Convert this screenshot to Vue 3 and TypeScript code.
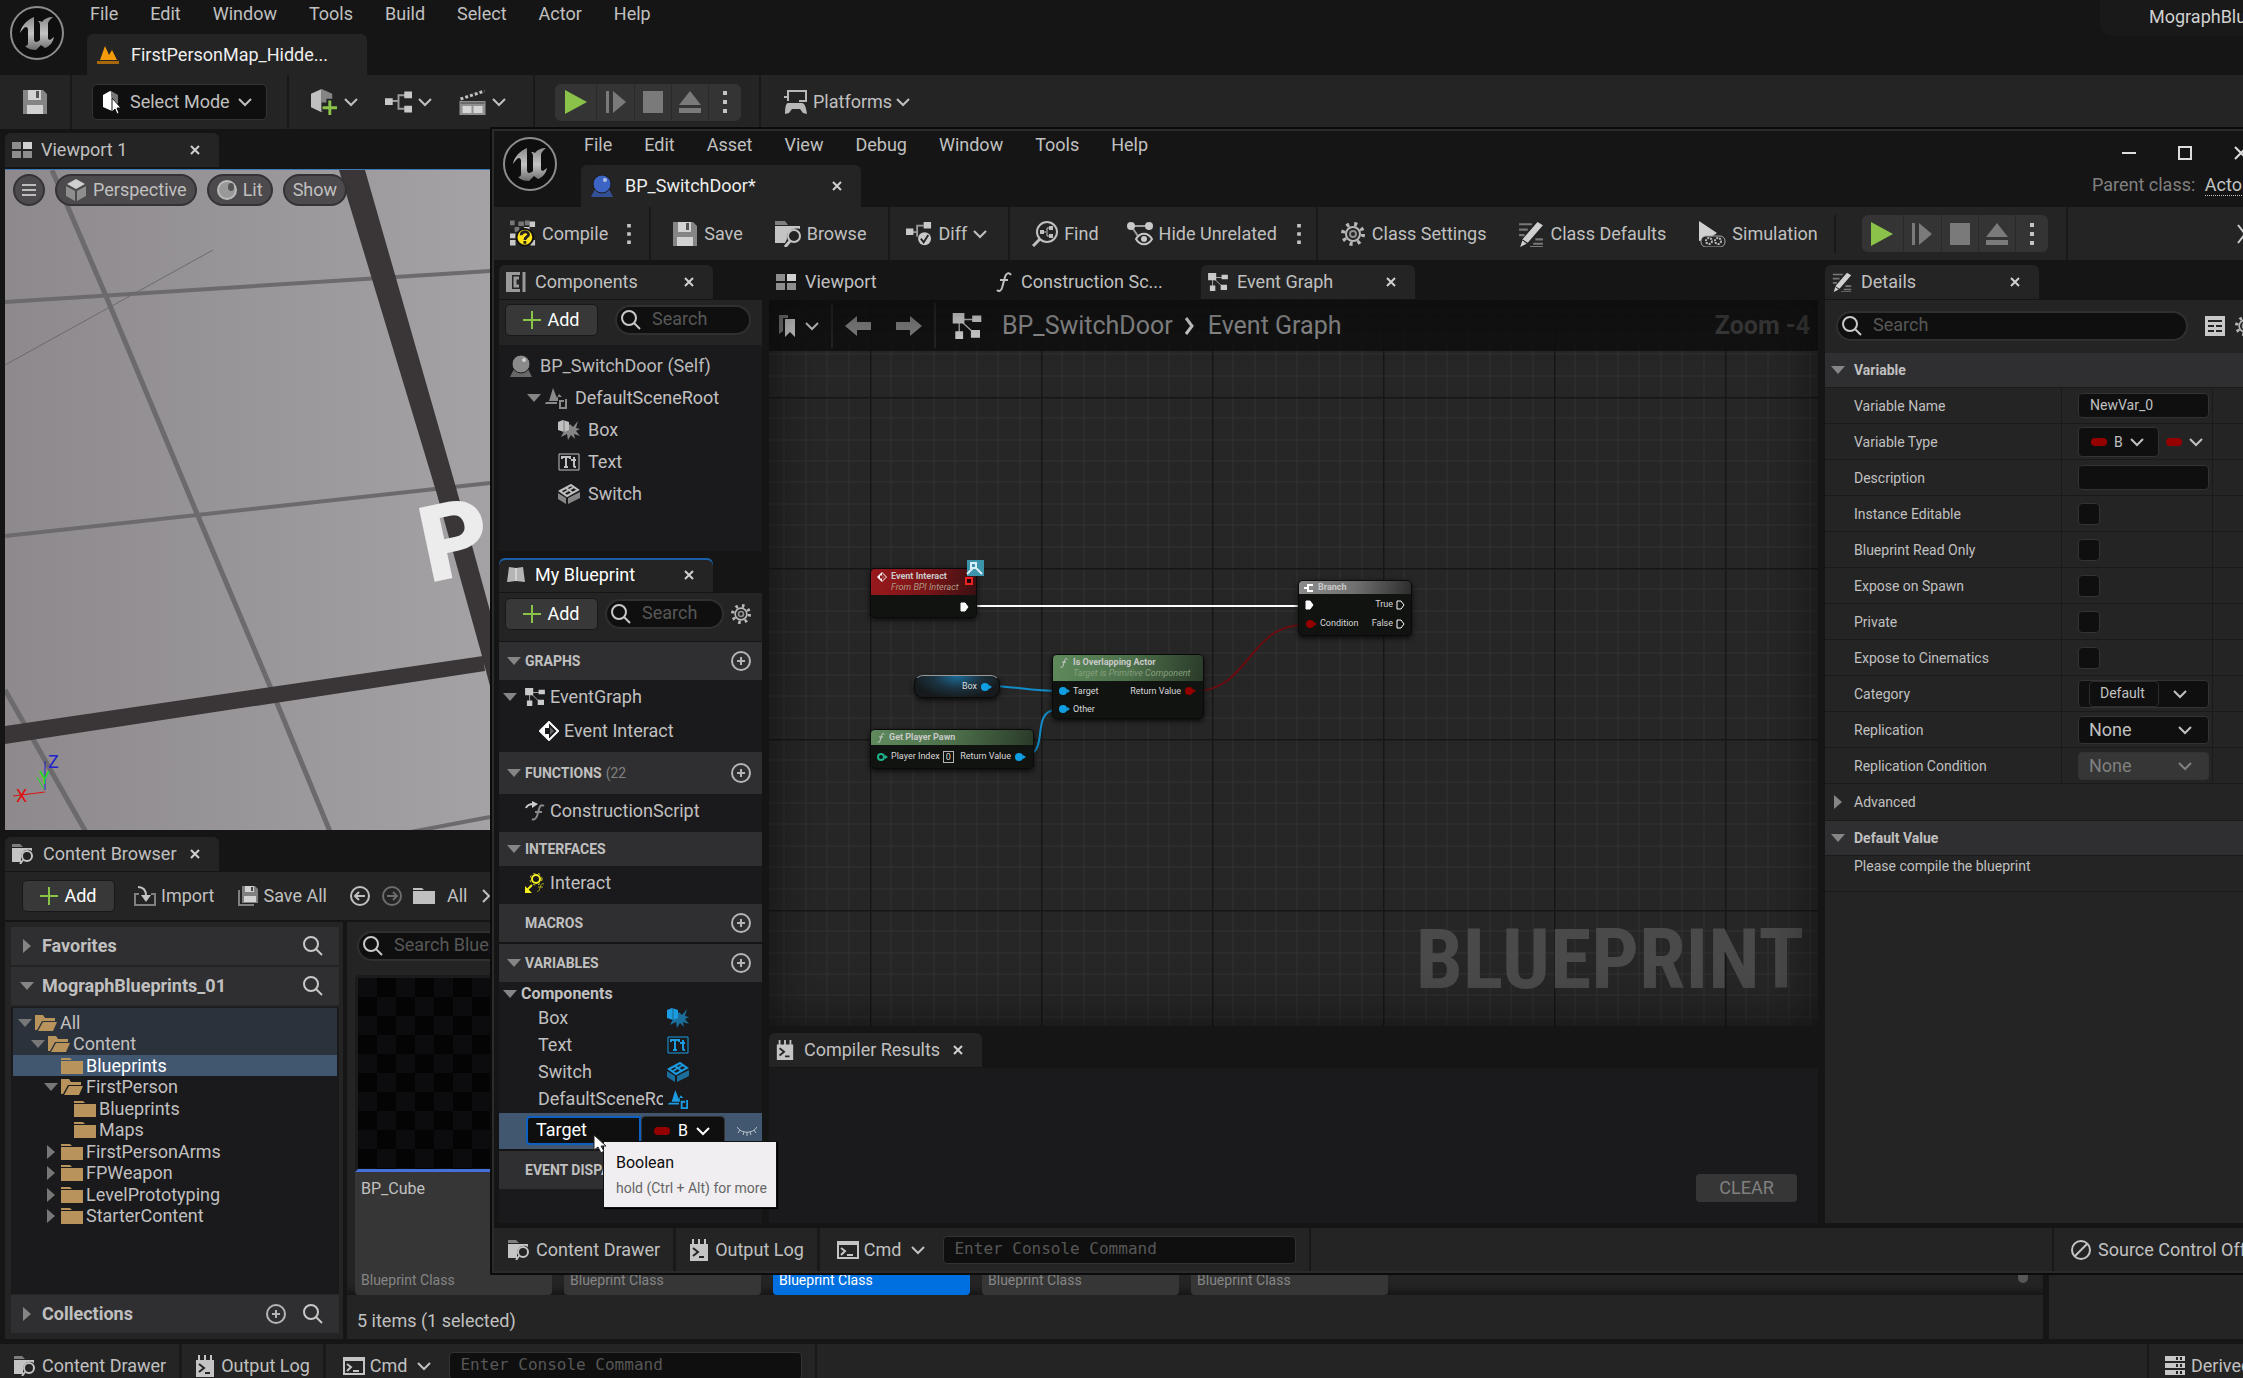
<script setup lang="ts">
import { ref } from 'vue'

const mainMenu = ['File', 'Edit', 'Window', 'Tools', 'Build', 'Select', 'Actor', 'Help']
const assetMenu = ['File', 'Edit', 'Asset', 'View', 'Debug', 'Window', 'Tools', 'Help']

interface Folder { name: string; depth: number; state: 'open' | 'closed' | 'leaf'; mark?: 'path' | 'selected' }
const folders: Folder[] = [
  { name: 'All', depth: 0, state: 'open', mark: 'path' },
  { name: 'Content', depth: 1, state: 'open', mark: 'path' },
  { name: 'Blueprints', depth: 2, state: 'leaf', mark: 'selected' },
  { name: 'FirstPerson', depth: 2, state: 'open' },
  { name: 'Blueprints', depth: 3, state: 'leaf' },
  { name: 'Maps', depth: 3, state: 'leaf' },
  { name: 'FirstPersonArms', depth: 2, state: 'closed' },
  { name: 'FPWeapon', depth: 2, state: 'closed' },
  { name: 'LevelPrototyping', depth: 2, state: 'closed' },
  { name: 'StarterContent', depth: 2, state: 'closed' },
]

interface Asset { name: string; selected: boolean }
const assets: Asset[] = [
  { name: 'BP_Cube', selected: false },
  { name: '', selected: false },
  { name: '', selected: true },
  { name: '', selected: false },
  { name: '', selected: false },
]

const children = [
  { name: 'Box', icon: 'box' },
  { name: 'Text', icon: 'text' },
  { name: 'Switch', icon: 'mesh' },
]
const variables = [...children, { name: 'DefaultSceneRoot', icon: 'root' }]
const flags = ['Instance Editable', 'Blueprint Read Only', 'Expose on Spawn', 'Private', 'Expose to Cinematics']

const variableName = ref('NewVar_0')
const renaming = ref('Target')
const description = ref('')
const minor = [21, 43, 64, 85, 107, 128, 150]
</script>

<template>
  <div class="app">
    <svg class="defs" aria-hidden="true">
      <defs>
        <linearGradient id="metal" x1="0" y1="0" x2="0" y2="1">
          <stop offset="0" stop-color="#8a8a8a" /><stop offset=".5" stop-color="#c4c4c4" /><stop offset="1" stop-color="#6c6c6c" />
        </linearGradient>
        <symbol id="logo" viewBox="0 0 54 54">
          <circle cx="27" cy="27" r="26" fill="#0e0e0e" stroke="#8d8d8d" stroke-width="2" />
          <path fill="url(#metal)" d="M24 11c-7 3-13 9-14 16 2-3 4-6 6-6 1 0 2 1 2 3v13c0 2-1 3-3 3 3 3 7 4 11 4l5-5 4 3c5-2 8-6 9-11l-4 3c-1 0-2-1-2-2V18c0-3 3-5 5-7-5 0-9 2-11 5-1-1-2-1-4-1 2 2 2 3 2 5v14c-1 1-3 2-4 2s-2-1-2-3V17c0-3 0-4 0-6z" />
        </symbol>
        <symbol id="save" viewBox="0 0 24 24"><path fill="#858585" d="M0 0h20l4 4v20H0z" /><path fill="#d2d2d2" d="M5 0h13v10H5zM4 15h16v9H4z" /><path fill="#555" d="M13 1h3v7h-3z" /></symbol>
        <symbol id="mode" viewBox="0 0 20 24"><path fill="#fff" d="M8 1l7 4v10l-5 6-9-4V5z" /><path fill="#777" d="M9 1l7 4v9l-7-7z" /><path fill="#fff" stroke="#111" d="M10 8l9 10h-4l2 5-2 1-2-5-3 3z" /></symbol>
        <symbol id="addcube" viewBox="0 0 28 28"><path fill="#c0c0c0" d="M0 5l11-5v24L0 19z" /><path fill="#858585" d="M11 0l11 5v11l-11 8z" /><path fill="#242424" d="M11 14h5v-4h8v5h4v8h-4v5h-8v-5h-5z" /><path fill="#8bc34a" d="M12 18h6v-6h3v6h6v3h-6v6h-3v-6h-6z" /></symbol>
        <symbol id="nodes" viewBox="0 0 28 22"><path fill="none" stroke="#9a9a9a" stroke-width="2" d="M7 10h6M21 4h-7v14h7" /><path fill="#c8c8c8" d="M0 7h8v7H0zM20 0h8v7h-8zM20 15h8v7h-8z" /></symbol>
        <symbol id="clap" viewBox="0 0 26 26"><path stroke="#c0c0c0" stroke-width="3" stroke-dasharray="3 2" d="M1 10L25 2" /><path fill="#909090" d="M0 12h26v14H0z" /><path fill="#d5d5d5" d="M3 17h9v7H3zM14 17h9v7h-9z" /><path stroke="#444" d="M1 14h24" /></symbol>
        <symbol id="play" viewBox="0 0 22 24"><path fill="#8bc34a" d="M0 0l22 12L0 24z" /></symbol>
        <symbol id="step" viewBox="0 0 22 24"><path fill="#7a7a7a" d="M1 1h3v22H1zM8 1l13 11L8 23z" /></symbol>
        <symbol id="stop" viewBox="0 0 22 24"><path fill="#7a7a7a" d="M1 1h20v22H1z" /></symbol>
        <symbol id="eject" viewBox="0 0 22 24"><path fill="#7a7a7a" d="M11 1l11 14H0zM0 18h22v5H0z" /></symbol>
        <symbol id="dots" viewBox="0 0 6 24"><path fill="#c4c4c4" d="M1 1h4v4H1zM1 10h4v4H1zM1 19h4v4H1z" /></symbol>
        <symbol id="platforms" viewBox="0 0 26 26"><path fill="none" stroke="#b8b8b8" stroke-width="2" d="M5 12V2h18v10h-7M1 8h4" /><path fill="#b8b8b8" d="M5 14h14c2 0 4 3 5 11l-4-1-3-4H9l-3 4-4 1c0-7 1-11 3-11z" /></symbol>
        <symbol id="chev" viewBox="0 0 14 14"><path fill="none" stroke="currentColor" stroke-width="2" d="M1 4l6 6 6-6" /></symbol>
        <symbol id="close" viewBox="0 0 14 14"><path stroke="currentColor" stroke-width="2" d="M3 3l8 8M11 3l-8 8" /></symbol>
        <symbol id="quad" viewBox="0 0 20 16"><path fill="#8d8d8d" d="M0 0h9v7H0zM0 9h9v7H0zM11 9h9v7h-9z" /><path fill="#d0d0d0" d="M11 0h9v7h-9z" /></symbol>
        <symbol id="burger" viewBox="0 0 16 16"><path stroke="#bdbdbd" stroke-width="2" d="M1 3h14M1 8h14M1 13h14" /></symbol>
        <symbol id="persp" viewBox="0 0 22 22"><path fill="#cfcfcf" d="M11 0l9 5-9 5-9-5z" /><path fill="#8e8e8e" d="M1 7l9 5v10l-9-5zM21 7l-9 5v10l9-5z" /></symbol>
        <symbol id="lit" viewBox="0 0 20 20"><circle cx="10" cy="10" r="9" fill="#999" stroke="#bbb" stroke-width="2" /><ellipse cx="14" cy="7" rx="3" ry="4" fill="#555" /></symbol>
        <symbol id="drawer" viewBox="0 0 22 20"><path fill="#7e7e7e" d="M0 0h8l3 3H0z" /><path fill="#c4c4c4" d="M0 4h20v3c-5-3-11 0-11 6v5H0z" /><circle cx="15" cy="12" r="5" fill="#242424" stroke="#c4c4c4" stroke-width="2" /><path stroke="#c4c4c4" stroke-width="2" d="M11 16l-3 4" /></symbol>
        <symbol id="plus" viewBox="0 0 18 18"><path stroke="#8bc34a" stroke-width="2" d="M9 0v18M0 9h18" /></symbol>
        <symbol id="import" viewBox="0 0 22 20"><path fill="none" stroke="#808080" stroke-width="2" d="M5 8H1v11h20V8h-4" /><path fill="none" stroke="#c4c4c4" stroke-width="2" d="M4 1c6 0 8 4 8 9" /><path fill="#c4c4c4" d="M7 9h10l-5 7z" /></symbol>
        <symbol id="saveall" viewBox="0 0 20 20"><path fill="none" stroke="#808080" stroke-width="2" d="M1 4v15h15" /><path fill="#808080" d="M4 0h13l3 3v14H4z" /><path fill="#d2d2d2" d="M7 0h9v6H7zM6 10h12v6H6z" /><path fill="#444" d="M13 1h2v4h-2z" /></symbol>
        <symbol id="back" viewBox="0 0 22 22"><circle cx="11" cy="11" r="9" fill="none" stroke="currentColor" stroke-width="2" /><path fill="none" stroke="currentColor" stroke-width="2" d="M16 11H6M10 7l-4 4 4 4" /></symbol>
        <symbol id="folder" viewBox="0 0 22 16"><path fill="currentColor" d="M0 0h9l2 2H0zM0 3h22v13H0z" /></symbol>
        <symbol id="folderopen" viewBox="0 0 22 16"><path fill="currentColor" d="M0 0h8l2 3h10v3H7l-5 9H0z" /><path fill="currentColor" d="M8 7h14l-4 9H3z" /></symbol>
        <symbol id="search" viewBox="0 0 22 22"><circle cx="9" cy="9" r="7" fill="none" stroke="#c8c8c8" stroke-width="2" /><path stroke="#c8c8c8" stroke-width="2" d="M14 14l6 6" /></symbol>
        <symbol id="down" viewBox="0 0 14 10"><path fill="currentColor" d="M0 1h14L7 9z" /></symbol>
        <symbol id="right" viewBox="0 0 10 14"><path fill="currentColor" d="M1 0l8 7-8 7z" /></symbol>
        <symbol id="pluscircle" viewBox="0 0 20 20"><circle cx="10" cy="10" r="9" fill="none" stroke="#b5b5b5" stroke-width="2" /><path stroke="#b5b5b5" stroke-width="2" d="M10 6v8M6 10h8" /></symbol>
        <symbol id="log" viewBox="0 0 18 22"><path fill="#c4c4c4" d="M0 5h18v17H0zM2 0h2v6H2zM8 0h2v6H8zM14 0h2v6h-2z" /><path fill="none" stroke="#242424" stroke-width="2" d="M3 9l5 4-5 4M9 18h5" /></symbol>
        <symbol id="cmd" viewBox="0 0 22 18"><path fill="none" stroke="#c4c4c4" stroke-width="2" d="M1 1h20v16H1z" /><path fill="#c4c4c4" d="M1 1h20v3H1z" /><path fill="none" stroke="#c4c4c4" stroke-width="2" d="M4 7l4 3-4 4M10 14h6" /></symbol>
        <symbol id="compile" viewBox="0 0 28 28"><path fill="#777" d="M0 0h5v5H0zM9 1h6v5H9zM5 7h5v5H5zM16 0h5v5h-5z" /><path fill="#c8c8c8" d="M21 1h6v6h-6zM0 14h6v5H0zM0 21h6v6H0zM15 7h6v5h-6zM22 21h5v6h-5z" /><circle cx="16" cy="18" r="9" fill="#ffe21b" stroke="#111" stroke-width="2" /><path fill="none" stroke="#222" stroke-width="3" d="M12 16c0-5 8-5 8-1 0 3-4 2-4 6M16 22v3" /></symbol>
        <symbol id="browse" viewBox="0 0 26 26"><path fill="#808080" d="M0 0h10l3 4H0z" /><path fill="#c4c4c4" d="M0 5h25v3c-8-2-14 3-13 10l-2 4H0z" /><circle cx="19" cy="15" r="6" fill="#242424" stroke="#c4c4c4" stroke-width="2" /><path stroke="#c4c4c4" stroke-width="3" d="M15 20l-5 6" /></symbol>
        <symbol id="diff" viewBox="0 0 28 26"><path fill="none" stroke="#999" stroke-width="2" d="M7 11h5V4h7M12 11v5" /><path fill="#c8c8c8" d="M0 7h8v7H0zM19 0h8v7h-8z" /><circle cx="20" cy="18" r="7" fill="#c8c8c8" /><path fill="none" stroke="#242424" stroke-width="2" d="M16 18l3 4 5-8" /></symbol>
        <symbol id="find" viewBox="0 0 26 26"><circle cx="15" cy="11" r="10" fill="none" stroke="#c0c0c0" stroke-width="2" /><path stroke="#c0c0c0" stroke-width="3" d="M8 18l-7 7" /><path fill="none" stroke="#c0c0c0" d="M11 11h3M18 7h-3v8h3" /><path fill="#c0c0c0" d="M8 9h4v4H8zM17 5h4v4h-4zM17 13h4v4h-4z" /></symbol>
        <symbol id="hide" viewBox="0 0 26 24"><path fill="none" stroke="#a0a0a0" stroke-width="2" d="M4 4h18M4 4l7 10" /><circle cx="4" cy="4" r="4" fill="#c8c8c8" /><circle cx="22" cy="4" r="4" fill="#c8c8c8" /><path fill="#242424" stroke="#c8c8c8" stroke-width="2" d="M9 17c4-7 12-7 16 0-4 7-12 7-16 0z" /><circle cx="17" cy="17" r="3" fill="#c8c8c8" /></symbol>
        <symbol id="gear" viewBox="0 0 24 24"><circle cx="12" cy="12" r="10" fill="none" stroke="#b8b8b8" stroke-width="4" stroke-dasharray="3 5" /><circle cx="12" cy="12" r="7" fill="none" stroke="#b8b8b8" stroke-width="2" /><circle cx="12" cy="12" r="3" fill="none" stroke="#909090" stroke-width="2" /></symbol>
        <symbol id="pencil" viewBox="0 0 24 24"><path stroke="#777" stroke-width="2" d="M1 3h12M1 8h8M1 13h5M16 17h7M14 21h9M11 24h12" /><path fill="#d0d0d0" d="M18 1l5 3L9 20l-5-3zM4 18l4 3-6 3z" /></symbol>
        <symbol id="sim" viewBox="0 0 28 26"><path fill="#d0d0d0" d="M1 0l18 12-3 2-6 4-9 2z" /><rect x="3" y="15" width="24" height="11" rx="5" fill="#242424" stroke="#a8a8a8" /><circle cx="11" cy="20" r="3" fill="none" stroke="#bbb" stroke-width="2" stroke-dasharray="2 1" /><circle cx="20" cy="20" r="3" fill="none" stroke="#bbb" stroke-width="2" stroke-dasharray="2 1" /></symbol>
        <symbol id="comp" viewBox="0 0 20 20"><path fill="#9a9a9a" d="M0 0h14v3H6v14h8v3H0z" /><path fill="none" stroke="#9a9a9a" stroke-width="3" d="M13 6H9v8h4M18 0v20" /></symbol>
        <symbol id="func" viewBox="0 0 16 20"><path fill="none" stroke="currentColor" stroke-width="2" d="M15 3c-2-3-5-2-6 2L6 16c-1 3-3 4-5 2M4 8h8" /></symbol>
        <symbol id="graph" viewBox="0 0 22 20"><path fill="none" stroke="#b0b0b0" d="M5 5h12M5 5l12 11M5 5v12" /><path fill="#cacaca" d="M0 0h9v8H0zM15 2h7v5h-7zM14 13h7v6h-7zM2 14h6v6H2z" /></symbol>
        <symbol id="bookmark" viewBox="0 0 16 22"><path fill="#777" d="M0 0h9v3H4v13l-4 3z" /><path fill="#c8c8c8" d="M6 4h10v18l-5-5-5 5z" /></symbol>
        <symbol id="arrow" viewBox="0 0 26 20"><path fill="#7a7a7a" d="M0 10L12 0v6h14v8H12v6z" /></symbol>
        <symbol id="actor" viewBox="0 0 22 22"><path fill="currentColor" d="M4 14h14l4 8H0z" opacity=".7" /><circle cx="11" cy="9" r="9" fill="currentColor" stroke="#1b1b1b" /><circle cx="14" cy="5" r="2" fill="#fff" opacity=".6" /></symbol>
        <symbol id="level" viewBox="0 0 22 18"><path fill="#f59b0b" d="M3 14L8 0l4 9 3-5 5 10z" /><path fill="#a8690c" d="M0 15h22v3H0z" /></symbol>
        <symbol id="root" viewBox="0 0 22 22"><path fill="currentColor" d="M4 14L8 1l4 10 2-4 3 3h-4v4zM1 15h11v2H0z" /><path fill="none" stroke="currentColor" stroke-width="2" d="M19 14h-4v7h6v-9" /></symbol>
        <symbol id="box" viewBox="0 0 22 20"><path fill="currentColor" opacity=".65" d="M12 4l3 3 5-6-2 7 4 1-4 2 4 5-6-2 1 5-4-4-3 5-1-6-6 3 3-6z" /><path fill="currentColor" d="M0 2l5-2 6 2v8l-5 2-6-2z" /><path stroke="#1a191c" opacity=".4" d="M6 0v12" /></symbol>
        <symbol id="text" viewBox="0 0 22 18"><path fill="none" stroke="currentColor" d="M1 1h20v16H1z" /><path fill="none" stroke="currentColor" stroke-width="2" d="M4 6V4h8v2M8 4v10M6 14h4M16 4v9c0 1 1 1 2 1M13 7h5" /></symbol>
        <symbol id="mesh" viewBox="0 0 22 20"><path fill="none" stroke="currentColor" stroke-width="2" d="M2 7L13 1l7 5-11 6zM8 4l7 5M6 9l10-6" /><path fill="currentColor" opacity=".65" d="M0 9l8 5v6l-8-5zM10 14l12-6v6l-12 6z" /></symbol>
        <symbol id="book" viewBox="0 0 20 18"><path fill="#b5b5b5" d="M3 1l7 1 7-1 2 15-9-1-9 1z" /><path stroke="#eee" d="M10 2v13" /></symbol>
        <symbol id="event" viewBox="0 0 20 20"><path fill="none" stroke="#fff" stroke-width="2" d="M10 1l9 9-9 9-9-9z" /><path fill="#fff" d="M10 1v6H6v6h4v6l-9-9z" /><path fill="#fff" d="M11 6l4 4-4 4z" opacity=".3" /></symbol>
        <symbol id="cscript" viewBox="0 0 20 20"><path fill="none" stroke="#888" stroke-width="2" d="M19 5c-3-2-4 0-5 3l-2 7c-1 3-3 4-5 3M10 11h7" /><path fill="none" stroke="#ccc" stroke-width="2" d="M1 7c1-3 4-4 8-4" /><path fill="#ccc" d="M7 0l6 3-6 4z" /></symbol>
        <symbol id="iface" viewBox="0 0 20 20"><circle cx="11" cy="6" r="4" fill="none" stroke="#f4ee1d" stroke-width="2" /><circle cx="11" cy="6" r="6" fill="none" stroke="#f4ee1d" stroke-width="1" stroke-dasharray="2 3" /><path stroke="#f4ee1d" stroke-width="2" d="M7 12l-5 5" /><path fill="#f4ee1d" d="M0 13v7h7z" /><path fill="none" stroke="#b1ac18" d="M19 11c-3-1-3 1-4 4s-2 4-3 3M13 14h5" /></symbol>
        <symbol id="eye" viewBox="0 0 20 10"><path fill="none" stroke="#b9c2cb" stroke-width="1" d="M0 1c4 7 16 7 20 0M3 4L1 7M7 6l-1 3M13 6l1 3M17 4l2 3M10 6v4" /></symbol>
        <symbol id="nosrc" viewBox="0 0 22 22"><circle cx="11" cy="11" r="9" fill="none" stroke="#c4c4c4" stroke-width="2" /><path stroke="#c4c4c4" stroke-width="2" d="M5 17L17 5" /></symbol>
        <symbol id="server" viewBox="0 0 20 20"><path fill="#c8c8c8" d="M0 0h20v5H0zM0 7h20v5H0zM0 14h20v5H0z" /><path stroke="#242424" stroke-width="2" d="M12 1v3M16 1v3M12 8v3M16 8v3M12 15v3M16 15v3" /></symbol>
        <symbol id="grid" viewBox="0 0 20 20"><path fill="#c8c8c8" d="M0 0h20v20H0z" /><path stroke="#242424" stroke-width="2" d="M3 5h14M3 10h6M11 10h6M3 15h6M11 15h6" /></symbol>
        <symbol id="exec" viewBox="0 0 9 10"><path d="M1 1h4l3 4-3 4H1z" fill="currentColor" stroke="#fff" /></symbol>
        <symbol id="pin" viewBox="0 0 12 10"><circle cx="5" cy="5" r="4" fill="currentColor" /><path fill="currentColor" d="M9 3l3 2-3 2z" /></symbol>
        <symbol id="branch" viewBox="0 0 10 10"><path fill="none" stroke="#fff" stroke-width="2" d="M0 5h3M9 2H4v6h5" /></symbol>
      </defs>
    </svg>

    <!-- Level editor -->
    <header class="title">
      <svg class="logo"><use href="#logo" /></svg>
      <div class="title-col">
        <nav class="menu"><button v-for="m in mainMenu" :key="m">{{ m }}</button></nav>
        <div class="doc-tab"><svg width="22" height="18"><use href="#level" /></svg><span>FirstPersonMap_Hidde...</span></div>
      </div>
      <div class="project">MographBlueprints_01</div>
    </header>

    <div class="toolbar">
      <button class="savebtn" aria-label="Save"><svg width="24" height="24"><use href="#save" /></svg></button>
      <i class="sep"></i>
      <button class="mode"><svg width="20" height="24"><use href="#mode" /></svg>Select Mode<svg class="chev"><use href="#chev" /></svg></button>
      <i class="sep"></i>
      <div class="quick">
        <button aria-label="Add"><svg width="27" height="27"><use href="#addcube" /></svg><svg class="chev"><use href="#chev" /></svg></button>
        <button aria-label="Blueprints"><svg width="27" height="22"><use href="#nodes" /></svg><svg class="chev"><use href="#chev" /></svg></button>
        <button aria-label="Cinematics"><svg width="27" height="26"><use href="#clap" /></svg><svg class="chev"><use href="#chev" /></svg></button>
      </div>
      <i class="sep"></i>
      <div class="player main-player">
        <button v-for="p in ['play', 'step', 'stop', 'eject']" :key="p" :aria-label="p"><svg width="22" height="24"><use :href="'#' + p" /></svg></button>
        <button aria-label="Play options"><svg width="6" height="24"><use href="#dots" /></svg></button>
      </div>
      <i class="sep"></i>
      <button class="tool platforms"><svg width="26" height="26"><use href="#platforms" /></svg>Platforms<svg class="chev"><use href="#chev" /></svg></button>
    </div>

    <main class="main">
      <div class="tabs"><div class="tab on"><svg width="20" height="16"><use href="#quad" /></svg>Viewport 1<button class="x" aria-label="Close"><svg><use href="#close" /></svg></button></div></div>
      <section class="viewport">
        <svg class="scene">
          <defs>
            <linearGradient id="floor" gradientUnits="userSpaceOnUse" x1="0" y1="0" x2="485" y2="0"><stop offset="0" stop-color="#8d898d" /><stop offset="1" stop-color="#a5a2a5" /></linearGradient>
          </defs>
          <rect width="100%" height="100%" fill="url(#floor)" />
          <g stroke="#6d6a6d" fill="none">
            <path stroke-width="4" d="M0 132L485 101M0 366L485 313M395 664L485 647" />
            <path stroke-width="5" d="M47 0L101 126 193 346 267 521 326 664M0 520L82 664" />
            <path d="M0 195L208 80" />
          </g>
          <path fill="#3a3638" d="M334 0h26L452 321l33 120v75L477 486 431 321zM0 556L478 486l2 15L0 574z" />
          <text x="424" y="413" class="floor-text" transform="rotate(-12 424 413)">P</text>
          <g fill="none"><path stroke="#e01212" d="M8 626l32-4" /><path stroke="#2020d0" d="M40 620v-29" /><path stroke="#18e018" d="M39 619l-7-12" /></g>
          <text x="43" y="598" fill="#2222cf" font-size="18">Z</text>
          <text x="34" y="614" fill="#1fdc1f" font-size="18">Y</text>
          <text x="11" y="632" fill="#e01212" font-size="18">X</text>
        </svg>
        <div class="pills">
          <button class="round" aria-label="Viewport options"><svg width="16" height="16"><use href="#burger" /></svg></button>
          <button><svg width="22" height="22"><use href="#persp" /></svg>Perspective</button>
          <button><svg width="20" height="20"><use href="#lit" /></svg>Lit</button>
          <button>Show</button>
        </div>
      </section>

      <div class="tabs browser-tabs"><div class="tab on"><svg width="22" height="20"><use href="#drawer" /></svg>Content Browser<button class="x" aria-label="Close"><svg><use href="#close" /></svg></button></div></div>
      <div class="browser-bar">
        <button class="add"><svg width="18" height="18"><use href="#plus" /></svg>Add</button>
        <button class="flat"><svg width="22" height="20"><use href="#import" /></svg>Import</button>
        <button class="flat"><svg width="20" height="20"><use href="#saveall" /></svg>Save All</button>
        <div class="path">
          <button class="flat" aria-label="Back"><svg width="22" height="22"><use href="#back" /></svg></button>
          <button class="flat fwd" aria-label="Forward"><svg width="22" height="22"><use href="#back" /></svg></button>
          <svg width="22" height="16" class="here"><use href="#folder" /></svg><span>All</span><svg class="chev"><use href="#chev" /></svg>
        </div>
      </div>
      <div class="browser">
        <aside class="sources">
          <div class="head"><svg width="14" height="14"><use href="#right" /></svg><b>Favorites</b><svg width="22" height="22"><use href="#search" /></svg></div>
          <div class="head"><svg width="14" height="10"><use href="#down" /></svg><b>MographBlueprints_01</b><svg width="22" height="22"><use href="#search" /></svg></div>
          <ul class="folders">
            <li v-for="(f, i) in folders" :key="i" :class="f.mark">
              <div :class="['entry', 'd' + f.depth]">
                <svg width="14" height="14" class="arrow"><use v-if="f.state !== 'leaf'" :href="f.state === 'open' ? '#down' : '#right'" /></svg>
                <svg width="22" height="16" class="gold"><use :href="f.state === 'open' ? '#folderopen' : '#folder'" /></svg>{{ f.name }}
              </div>
            </li>
          </ul>
          <div class="head"><svg width="14" height="14"><use href="#right" /></svg><b>Collections</b><svg width="20" height="20"><use href="#pluscircle" /></svg><svg width="22" height="22" class="far"><use href="#search" /></svg></div>
        </aside>
        <section class="assets">
          <label class="searchbox asset-search"><svg width="22" height="22"><use href="#search" /></svg><input type="text" placeholder="Search Blueprints" aria-label="Search Blueprints" /></label>
          <div class="tiles">
            <article v-for="(a, i) in assets" :key="i" :class="['tile', { chosen: a.selected }]">
              <div class="thumb"></div>
              <span class="name">{{ a.name }}</span>
              <small>Blueprint Class</small>
            </article>
            <i class="thumbbar"></i>
          </div>
          <p>5 items (1 selected)</p>
        </section>
        <aside class="rest"></aside>
      </div>
    </main>

    <footer class="status main-status">
      <button class="st"><svg width="22" height="20"><use href="#drawer" /></svg>Content Drawer</button>
      <button class="st log"><svg width="18" height="22"><use href="#log" /></svg>Output Log</button>
      <div class="console">
        <button class="cmd"><svg width="22" height="18"><use href="#cmd" /></svg>Cmd<svg class="chev"><use href="#chev" /></svg></button>
        <input type="text" placeholder="Enter Console Command" aria-label="Console command" />
      </div>
      <div class="tail derived"><svg width="20" height="20"><use href="#server" /></svg>Derived Data</div>
    </footer>

    <!-- Blueprint editor window -->
    <div class="window">
      <div class="frame">
        <header class="title">
          <svg class="logo"><use href="#logo" /></svg>
          <div class="title-col">
            <nav class="menu"><button v-for="m in assetMenu" :key="m">{{ m }}</button></nav>
            <div class="doc-tab"><svg width="22" height="22" class="blue"><use href="#actor" /></svg><span>BP_SwitchDoor*</span><button class="x" aria-label="Close"><svg><use href="#close" /></svg></button></div>
          </div>
          <div class="win-side">
            <div class="controls">
              <button aria-label="Minimize"><svg width="14" height="14"><path stroke="#ddd" stroke-width="2" d="M0 7h14" /></svg></button>
              <button aria-label="Maximize"><svg width="14" height="14"><path fill="none" stroke="#ddd" stroke-width="2" d="M1 1h12v12H1z" /></svg></button>
              <button aria-label="Close window"><svg width="14" height="14"><path stroke="#ddd" stroke-width="2" d="M1 1l12 12M13 1L1 13" /></svg></button>
            </div>
            <div class="parent">Parent class: <a href="#">Actor</a></div>
          </div>
        </header>

        <div class="toolbar">
          <button class="tool"><svg width="26" height="27"><use href="#compile" /></svg>Compile</button>
          <button class="more" aria-label="Compile options"><svg width="6" height="22"><use href="#dots" /></svg></button>
          <i class="sep"></i>
          <div class="set first">
            <button class="tool"><svg width="26" height="24"><use href="#save" /></svg>Save</button>
            <button class="tool"><svg width="26" height="26"><use href="#browse" /></svg>Browse</button>
          </div>
          <i class="sep"></i>
          <button class="tool"><svg width="26" height="26"><use href="#diff" /></svg>Diff<svg class="chev"><use href="#chev" /></svg></button>
          <i class="sep wide"></i>
          <div class="set snug">
            <button class="tool"><svg width="26" height="26"><use href="#find" /></svg>Find</button>
            <button class="tool"><svg width="26" height="24"><use href="#hide" /></svg>Hide Unrelated</button>
          </div>
          <button class="more tight" aria-label="Hide options"><svg width="6" height="22"><use href="#dots" /></svg></button>
          <i class="sep"></i>
          <div class="set open">
            <button class="tool"><svg width="26" height="24"><use href="#gear" /></svg>Class Settings</button>
            <button class="tool"><svg width="26" height="26"><use href="#pencil" /></svg>Class Defaults</button>
            <button class="tool"><svg width="28" height="26"><use href="#sim" /></svg>Simulation</button>
          </div>
          <i class="sep short"></i>
          <div class="player">
            <button v-for="p in ['play', 'step', 'stop', 'eject']" :key="p" :aria-label="p"><svg width="22" height="24"><use :href="'#' + p" /></svg></button>
            <button aria-label="Play options"><svg width="6" height="24"><use href="#dots" /></svg></button>
          </div>
          <i class="sep"></i>
          <button class="overflow" aria-label="More tools"><svg width="14" height="20"><path fill="none" stroke="#ccc" stroke-width="2" d="M1 1l7 9-7 9M7 1l7 9-7 9" /></svg></button>
        </div>

        <div class="body">
          <aside class="left">
            <div class="tabs"><div class="tab on"><svg width="20" height="20"><use href="#comp" /></svg>Components<button class="x" aria-label="Close"><svg><use href="#close" /></svg></button></div></div>
            <div class="panel-bar">
              <button class="add"><svg width="18" height="18"><use href="#plus" /></svg>Add</button>
              <label class="searchbox"><svg width="22" height="22"><use href="#search" /></svg><input type="text" placeholder="Search" aria-label="Search components" /></label>
            </div>
            <ul class="comps">
              <li class="self"><svg width="22" height="22"><use href="#actor" /></svg>BP_SwitchDoor (Self)</li>
              <li class="sroot"><svg width="14" height="10" class="dim"><use href="#down" /></svg><svg width="22" height="22" class="grey"><use href="#root" /></svg>DefaultSceneRoot</li>
              <li v-for="c in children" :key="c.name" class="child"><svg width="22" height="20"><use :href="'#' + c.icon" /></svg>{{ c.name }}</li>
            </ul>
            <div class="tabs my-tabs"><div class="tab on focus"><svg width="20" height="18"><use href="#book" /></svg>My Blueprint<button class="x" aria-label="Close"><svg><use href="#close" /></svg></button></div></div>
            <div class="panel-bar">
              <button class="add"><svg width="18" height="18"><use href="#plus" /></svg>Add</button>
              <label class="searchbox near"><svg width="22" height="22"><use href="#search" /></svg><input type="text" placeholder="Search" aria-label="Search blueprint" /></label>
              <button class="flat" aria-label="Settings"><svg width="20" height="20"><use href="#gear" /></svg></button>
            </div>
            <div class="outline">
              <div class="sec"><svg width="14" height="10"><use href="#down" /></svg><b>GRAPHS</b><svg width="20" height="20"><use href="#pluscircle" /></svg></div>
              <ul class="rows">
                <li><svg width="14" height="10" class="dim"><use href="#down" /></svg><svg width="20" height="18"><use href="#graph" /></svg>EventGraph</li>
                <li class="sub"><svg width="20" height="20"><use href="#event" /></svg>Event Interact</li>
              </ul>
              <div class="sec tall"><svg width="14" height="10"><use href="#down" /></svg><b>FUNCTIONS</b><span>(22</span><svg width="20" height="20"><use href="#pluscircle" /></svg></div>
              <ul class="rows"><li class="flush"><svg width="20" height="20"><use href="#cscript" /></svg>ConstructionScript</li></ul>
              <div class="sec low"><svg width="14" height="10"><use href="#down" /></svg><b>INTERFACES</b></div>
              <ul class="rows"><li class="flush"><svg width="20" height="20"><use href="#iface" /></svg>Interact</li></ul>
              <div class="sec"><svg width="14" height="10"></svg><b>MACROS</b><svg width="20" height="20"><use href="#pluscircle" /></svg></div>
              <div class="sec spaced"><svg width="14" height="10"><use href="#down" /></svg><b>VARIABLES</b><svg width="20" height="20"><use href="#pluscircle" /></svg></div>
              <div class="group"><svg width="14" height="10"><use href="#down" /></svg>Components</div>
              <ul class="vars">
                <li v-for="v in variables" :key="v.name"><span>{{ v.name }}</span><svg width="22" height="20"><use :href="'#' + v.icon" /></svg></li>
              </ul>
              <div class="rename">
                <input v-model="renaming" type="text" aria-label="Variable name" />
                <button class="type"><i class="pill"></i>B<svg class="chev"><use href="#chev" /></svg></button>
                <svg width="20" height="10"><use href="#eye" /></svg>
              </div>
              <div class="sec spaced"><svg width="14" height="10"></svg><b>EVENT DISPATCHERS</b></div>
            </div>
          </aside>

          <section class="center">
            <div class="tabs">
              <div class="tab vp"><svg width="20" height="16"><use href="#quad" /></svg>Viewport</div>
              <div class="tab cs"><svg width="16" height="20"><use href="#func" /></svg>Construction Sc...</div>
              <div class="tab on"><svg width="20" height="18"><use href="#graph" /></svg>Event Graph<button class="x" aria-label="Close"><svg><use href="#close" /></svg></button></div>
            </div>
            <div class="graph">
              <svg class="wires">
                <defs>
                  <pattern id="gridlines" x="101" y="97" width="171" height="171" patternUnits="userSpaceOnUse">
                    <path v-for="n in minor" :key="n" :d="`M${n} 0V171M0 ${n}H171`" stroke="#313131" />
                    <path d="M0 0V171M0 0H171" stroke="#161616" stroke-width="3" />
                  </pattern>
                </defs>
                <rect width="100%" height="100%" fill="url(#gridlines)" />
                <g fill="none">
                  <path stroke="#fff" stroke-width="2" d="M204 306H536" />
                  <path stroke="#118cc9" stroke-width="2" d="M220 386C245 386 260 391 290 391" />
                  <path stroke="#118cc9" stroke-width="2" d="M258 455C280 452 262 412 286 410" />
                  <path stroke="#6b0d10" stroke-width="2" d="M426 391C480 391 480 325 534 325" />
                </g>
              </svg>
              <div class="crumbs">
                <svg width="16" height="22"><use href="#bookmark" /></svg><svg class="chev"><use href="#chev" /></svg><i></i>
                <svg width="26" height="20"><use href="#arrow" /></svg><svg width="26" height="20" class="flip"><use href="#arrow" /></svg><i></i>
                <svg width="30" height="26" class="big"><use href="#graph" /></svg><span>BP_SwitchDoor</span><svg width="9" height="18"><path fill="none" stroke="#ccc" stroke-width="3" d="M1 1l6 8-6 8" /></svg><span>Event Graph</span>
                <b>Zoom -4</b>
              </div>
              <div class="node n-event">
                <header class="red"><svg width="10" height="10"><use href="#event" /></svg><div>Event Interact<em>From BPI Interact</em></div></header>
                <div class="pins end"><svg width="9" height="10" class="white"><use href="#exec" /></svg></div>
                <svg class="badge" width="20" height="26"><path fill="#3b93ac" d="M3 0h17v16H3z" /><path fill="none" stroke="#d8eef4" stroke-width="2" d="M3 14l6-6M18 14l-6-6M7 3h5v5H7z" /><path fill="#200" stroke="#e22" stroke-width="2" d="M2 18h6v6H2z" /></svg>
              </div>
              <div class="node n-branch">
                <header class="silver"><svg width="10" height="10"><use href="#branch" /></svg><div>Branch</div></header>
                <div class="pins"><svg width="9" height="10" class="white"><use href="#exec" /></svg><span></span><label>True</label><svg width="9" height="10" class="hollow"><use href="#exec" /></svg></div>
                <div class="pins"><svg width="12" height="10" class="bool"><use href="#pin" /></svg><label>Condition</label><span></span><label>False</label><svg width="9" height="10" class="hollow"><use href="#exec" /></svg></div>
              </div>
              <div class="node n-overlap">
                <header class="green"><svg width="8" height="10"><use href="#func" /></svg><div>Is Overlapping Actor<em>Target is Primitive Component</em></div></header>
                <div class="pins"><svg width="12" height="10" class="obj"><use href="#pin" /></svg><label>Target</label><span></span><label>Return Value</label><svg width="12" height="10" class="bool"><use href="#pin" /></svg></div>
                <div class="pins"><svg width="12" height="10" class="obj"><use href="#pin" /></svg><label>Other</label></div>
              </div>
              <div class="node n-box"><label>Box</label><svg width="12" height="10" class="obj"><use href="#pin" /></svg></div>
              <div class="node n-pawn">
                <header class="green"><svg width="8" height="10"><use href="#func" /></svg><div>Get Player Pawn</div></header>
                <div class="pins"><svg width="12" height="10"><circle cx="5" cy="5" r="3" fill="none" stroke="#1fb08a" stroke-width="2" /><path fill="#1fb08a" d="M9 3l3 2-3 2z" /></svg><label for="pindex">Player Index</label><input id="pindex" value="0" /><span></span><label>Return Value</label><svg width="12" height="10" class="obj"><use href="#pin" /></svg></div>
              </div>
              <div class="watermark">BLUEPRINT</div>
            </div>
            <div class="tabs results-tabs"><div class="tab on"><svg width="18" height="20"><use href="#log" /></svg>Compiler Results<button class="x" aria-label="Close"><svg><use href="#close" /></svg></button></div></div>
            <div class="results"><button>CLEAR</button></div>
          </section>

          <aside class="details">
            <div class="tabs"><div class="tab on"><svg width="20" height="20"><use href="#pencil" /></svg>Details<button class="x" aria-label="Close"><svg><use href="#close" /></svg></button></div></div>
            <div class="details-panel">
              <div class="details-bar">
                <label class="searchbox"><svg width="22" height="22"><use href="#search" /></svg><input type="text" placeholder="Search" aria-label="Search details" /></label>
                <svg width="20" height="20"><use href="#grid" /></svg><svg width="20" height="20"><use href="#gear" /></svg>
              </div>
              <div class="cat"><svg width="14" height="10"><use href="#down" /></svg>Variable</div>
              <div class="prop"><label for="vname">Variable Name</label><div><input id="vname" v-model="variableName" class="field" type="text" /></div></div>
              <div class="prop"><label for="vtype">Variable Type</label><div class="types"><button id="vtype" class="type"><i class="pill"></i>B<svg class="chev"><use href="#chev" /></svg></button><button class="type bare" aria-label="Container type"><i class="pill"></i><svg class="chev"><use href="#chev" /></svg></button></div></div>
              <div class="prop"><label for="vdesc">Description</label><div><input id="vdesc" v-model="description" class="field" type="text" /></div></div>
              <div v-for="(f, i) in flags" :key="f" class="prop"><label :for="'flag' + i">{{ f }}</label><div><input :id="'flag' + i" type="checkbox" /></div></div>
              <div class="prop"><label for="vcat">Category</label><div><div class="combo"><input id="vcat" type="text" value="Default" /><svg class="chev"><use href="#chev" /></svg></div></div></div>
              <div class="prop"><label for="vrep">Replication</label><div><div class="drop"><select id="vrep"><option>None</option></select><svg class="chev"><use href="#chev" /></svg></div></div></div>
              <div class="prop"><label for="vcond">Replication Condition</label><div><div class="drop off"><select id="vcond" disabled><option>None</option></select><svg class="chev"><use href="#chev" /></svg></div></div></div>
              <div class="adv"><svg width="14" height="14"><use href="#right" /></svg>Advanced</div>
              <div class="cat"><svg width="14" height="10"><use href="#down" /></svg>Default Value</div>
              <div class="note">Please compile the blueprint</div>
            </div>
          </aside>
        </div>

        <footer class="status">
          <button class="st"><svg width="22" height="20"><use href="#drawer" /></svg>Content Drawer</button>
          <button class="st log"><svg width="18" height="22"><use href="#log" /></svg>Output Log</button>
          <div class="console">
            <button class="cmd"><svg width="22" height="18"><use href="#cmd" /></svg>Cmd<svg class="chev"><use href="#chev" /></svg></button>
            <input type="text" placeholder="Enter Console Command" aria-label="Blueprint console command" />
          </div>
          <div class="tail source"><svg width="22" height="22"><use href="#nosrc" /></svg>Source Control Off</div>
        </footer>
      </div>
    </div>

    <div class="tooltip" role="tooltip"><strong>Boolean</strong><span>hold (Ctrl + Alt) for more</span></div>
    <svg class="cursor" width="14" height="20"><path fill="#fff" stroke="#222" d="M1 1v15l4-3 3 6 3-2-3-5h5z" /></svg>
  </div>
</template>

<style>
html, body { margin: 0; background: #151515; }
</style>

<style scoped>
* { box-sizing: border-box; }
.app { position: relative; display: flex; flex-direction: column; height: 100vh; overflow: hidden; background: #151515; color: #c0c0c0; font: 18px/22px Roboto, "Liberation Sans", sans-serif; }
.defs { position: absolute; width: 0; height: 0; }
svg { flex: none; display: block; }
button { display: flex; align-items: center; margin: 0; padding: 0; border: 0; background: none; color: inherit; font: inherit; white-space: nowrap; }
input, select { margin: 0; border: 0; outline: 0; color: inherit; font: inherit; }
ul { list-style: none; margin: 0; padding: 0; }
p { margin: 0; }
.chev { width: 14px; height: 14px; }

.title { display: flex; flex: none; height: 75px; background: #151515; }
.logo { width: 54px; height: 54px; margin: 6px 23px 0 10px; }
.title-col { display: flex; flex-direction: column; }
.menu { display: flex; gap: 32px; height: 34px; padding: 0 0 6px 3px; }
.doc-tab { display: flex; align-items: center; gap: 12px; width: 280px; height: 41px; padding: 0 10px; border-radius: 6px 6px 0 0; background: #242424; color: #eee; }
.doc-tab .blue { color: #3c64c4; }
.x { margin-left: auto; width: 14px; height: 14px; color: #d0d0d0; }
.x svg { width: 14px; height: 14px; }
.doc-tab .x { margin-right: 7px; }
.project { width: 143px; height: 36px; margin-left: auto; padding: 6px 0 0 49px; border-radius: 0 0 0 12px; background: #191919; color: #d0d0d0; white-space: nowrap; overflow: hidden; }

.toolbar { display: flex; align-items: center; flex: none; height: 54px; background: #242424; }
.sep { flex: none; width: 2px; height: 100%; background: #191919; }
.sep.short { height: 38px; }
.sep.wide { margin-left: 5px; }
.savebtn { padding: 0 23px; }
.mode { width: 175px; height: 36px; margin: 0 20px; padding: 0 14px 0 9px; gap: 8px; border: 1px solid #333; border-radius: 5px; background: #0f0f0f; }
.mode .chev { margin-left: auto; }
.quick { display: flex; gap: 27px; padding: 0 27px 0 22px; }
.quick button { gap: 6px; }
.player { display: grid; grid-template-columns: 42px 38px 37px 37px 32px; height: 37px; margin: 0 18px 0 26px; border-radius: 6px; background: #343434; overflow: hidden; }
.player button { justify-content: center; border-right: 1px solid #292929; }
.player button:last-child { border: 0; }
.main-player { margin: 0 18px 0 20px; }
.tool { gap: 6px; padding: 0 16px; }
.platforms { padding: 0 22px; gap: 4px; }
.set { display: flex; padding: 0 6px; }
.set.first { padding-left: 5px; }
.set.open { padding-right: 0; }
.set.snug .tool:first-child { padding-right: 12px; }
.set.snug { padding-right: 3px; }
.more { padding: 0 17px 0 2px; }
.more.tight { padding: 0 14px 0 0; }
.overflow { margin-left: auto; padding-right: 4px; }

.tabs { display: flex; align-items: flex-end; flex: none; height: 40px; padding-bottom: 1px; }
.tab { display: flex; align-items: center; gap: 9px; width: 214px; height: 34px; padding: 0 17px 0 7px; border-radius: 6px 6px 0 0; white-space: nowrap; }
.tab.on { background: #242424; }
.tab.focus { box-shadow: inset 0 2px #1a5fa8; color: #fff; }

.main { display: flex; flex-direction: column; flex: 1; min-height: 0; margin-left: 5px; }
.main .tabs { padding-bottom: 2px; }
.viewport { position: relative; flex: 1; min-height: 0; border-top: 1px solid #3f78b8; }
.scene { position: absolute; inset: 0; width: 100%; height: 100%; }
.floor-text { font-size: 106px; font-weight: 900; fill: #ececec; }
.pills { position: relative; display: flex; gap: 10px; padding: 4px 8px; color: #c0c0c0; }
.pills button { height: 32px; gap: 6px; padding: 0 8px; border: 2px solid #343234; border-radius: 16px; background: #4c4a4c; }
.pills .round { width: 32px; padding: 0 6px; }

.main .browser-tabs { height: 42px; padding-bottom: 1px; }
.browser-bar { display: flex; align-items: center; flex: none; height: 48px; padding-left: 17px; background: #242424; }
.add { justify-content: center; gap: 6px; width: 93px; height: 32px; border: 1px solid #181818; border-radius: 5px; background: #383838; color: #fff; }
.flat { gap: 5px; }
.browser-bar .flat { margin-left: 19px; }
.browser-bar .flat + .flat { margin-left: 24px; }
.path { display: flex; align-items: center; margin-left: 3px; }
.browser-bar .path .flat + .flat { margin-left: 10px; }
.fwd { color: #6c6c6c; }
.fwd svg, .flip { transform: rotate(180deg); }
.here { margin-left: 10px; }
.path span { margin: 0 12px; }
.path .chev { transform: rotate(-90deg); }
.browser { display: flex; flex: none; height: 424px; padding: 2px 0 5px; }
.sources { display: flex; flex-direction: column; width: 338px; padding: 5px 4px 6px 6px; background: #242424; }
.head { display: flex; align-items: center; flex: none; gap: 8px; height: 38px; margin-bottom: 2px; padding: 0 15px 0 9px; background: #2f2f31; }
.head .far { margin-left: 8px; }
.head > svg:first-child, .sec > svg:first-child, .cat svg, .adv svg, .dim, .group svg { color: #858585; }
.head b { flex: 1; }
.folders { flex: 1; margin-bottom: 1px; padding: 1px 2px 0; background: #1a191c; }
.folders li { display: flex; align-items: center; height: 21px; }
.folders li:nth-child(even) { height: 22px; }
.folders li:first-child { height: 25px; padding-top: 4px; }
.entry { display: flex; align-items: center; gap: 3px; padding-left: 5px; }
.d1 { padding-left: 18px; }
.d2 { padding-left: 31px; }
.d3 { padding-left: 44px; }
.arrow { color: #777; }
.gold { color: #b8935b; }
.folders .path { margin: 0; background: #2c323b; }
.folders .selected { background: #41566f; color: #fff; }
.head:last-child { margin: 0; }
.assets { display: flex; flex-direction: column; flex: 1; min-width: 0; margin-left: 4px; padding-top: 9px; background: #242424; }
.searchbox { display: flex; align-items: center; gap: 10px; height: 30px; padding: 0 3px; border: 2px solid #303030; border-radius: 15px; background: #0f0f0f; }
.searchbox input { flex: 1; width: 100%; min-width: 0; padding: 0 0 2px; background: transparent; }
input::placeholder { color: #575757; opacity: 1; }
.asset-search { width: 600px; margin: 0 0 14px 10px; }
.tiles { position: relative; display: grid; grid-template-columns: repeat(5, 197px); gap: 12px; height: 320px; padding-left: 8px; box-shadow: inset 0 -8px 6px -4px #151515; }
.tile { display: flex; flex-direction: column; border-radius: 4px; background: #363636; overflow: hidden; font-size: 15px; }
.thumb { height: 197px; border: 3px solid #1b1b1b; border-bottom: 3px solid #4470dc; background: repeating-conic-gradient(#040404 0 25%, #0c0c0e 0 50%) 0 0 / 38px 38px; }
.name { padding: 6px 6px; font-size: 16px; }
.tile small { margin-top: auto; padding: 0 6px 4px; font-size: 14px; color: #858585; }
.chosen { background: #0070e0; }
.chosen small { color: #fff; }
.thumbbar { position: absolute; right: 15px; bottom: 12px; width: 10px; height: 120px; border-radius: 5px; background: #575757; }
.assets p { padding: 15px 0 0 10px; }
.rest { width: 194px; margin-left: 6px; background: #242424; }

.status { display: flex; flex: none; height: 43px; background: #242424; white-space: nowrap; }
.main-status { margin-bottom: -9px; }
.st { gap: 6px; padding: 0 13px 0 14px; border-right: 3px solid #191919; }
.log { gap: 7px; }
.console { display: flex; align-items: center; padding: 0 13px 0 17px; border-right: 2px solid #191919; }
.cmd { gap: 5px; }
.cmd .chev { margin: 0 18px 0 5px; }
.console input { width: 353px; height: 28px; padding: 0 10px 2px; border: 1px solid #333; border-radius: 4px; background: #0f0f0f; font: 16px/20px "DejaVu Sans Mono", monospace; }
.tail { display: flex; align-items: center; gap: 6px; margin-left: auto; padding-left: 16px; border-left: 2px solid #191919; }
.derived { width: 96px; overflow: hidden; }
.source { width: 203px; }

.window { position: absolute; left: 490px; top: 127px; right: -16px; bottom: 103px; border: 2px solid #0b0b0b; }
.frame { display: flex; flex-direction: column; height: 100%; border: 2px solid #2b2b2b; background: #151515; }
.window .title { height: 76px; }
.window .doc-tab { height: 42px; }
.window .frame > .toolbar { height: 53px; }
.window .logo { margin-left: 9px; margin-right: 24px; }
.win-side { width: 163px; margin-left: auto; white-space: nowrap; }
.controls { display: flex; gap: 42px; padding: 15px 0 14px 30px; }
.parent { color: #808080; }
.parent a { margin-left: 5px; color: #c4c4c4; text-decoration: none; border-bottom: 1px dotted #c4c4c4; }
.body { display: flex; gap: 7px; flex: 1; min-height: 0; padding: 0 0 5px 5px; }
.left { display: flex; flex-direction: column; width: 263px; }
.panel-bar { display: flex; align-items: center; gap: 7px; flex: none; height: 45px; padding: 0 11px 6px 6px; background: #242424; }
.panel-bar .searchbox { flex: 1; margin-left: 10px; }
.panel-bar .searchbox.near { margin-left: 0; }
.comps { height: 206px; padding-top: 5px; background: #1a191c; }
.comps li { display: flex; align-items: center; gap: 8px; height: 32px; }
.self { padding-left: 11px; color: #bbb; }
.self svg, .grey { color: #8a8a8a; }
.sroot { padding-left: 28px; }
.sroot .dim { margin-right: -4px; }
.child { padding-left: 59px; }
.my-tabs { height: 42px; }
.my-tabs + .panel-bar { height: 48px; margin-bottom: 1px; }
.outline { flex: 1; background: #1a191c; overflow: hidden; }
.sec { display: flex; align-items: center; gap: 4px; height: 38px; padding: 0 11px 0 8px; background: #2f2f31; font-size: 14px; }
.sec.tall { height: 42px; }
.sec.low { height: 34px; }
.sec.spaced { margin-top: 2px; box-shadow: 0 -2px #151515; }
.sec b { font-weight: 700; }
.sec span { color: #808080; }
.sec svg:last-child { margin-left: auto; }
.rows { padding-bottom: 4px; }
.rows li { display: flex; align-items: center; gap: 5px; height: 34px; padding-left: 4px; }
.rows .dim { margin-right: 3px; }
.rows .sub { padding-left: 40px; }
.rows .flush { padding-left: 26px; }
.group { display: flex; align-items: center; gap: 4px; height: 23px; padding-left: 4px; font-size: 16px; font-weight: 700; }
.vars li { display: flex; align-items: center; height: 27px; padding: 0 0 1px 39px; }
.vars span { width: 125px; margin-right: 4px; overflow: hidden; white-space: nowrap; }
.vars svg { color: #1b9be0; }
.rename { display: flex; align-items: center; height: 36px; padding: 0 0 1px 27px; background: #41566f; color: #fff; }
.rename input { width: 115px; height: 29px; padding: 0 8px 3px; border: 2px solid #0d5fc0; border-radius: 4px 0 0 4px; background: #0f0f0f; }
.type { gap: 8px; width: 81px; height: 30px; padding-left: 12px; border: 1px solid #333; border-radius: 4px; background: #0f0f0f; font-size: 16px; }
.rename .type { width: 84px; }
.pill { width: 16px; height: 8px; border-radius: 4px; background: #950101; }
.rename > svg { margin-left: 12px; }

.center { display: flex; flex-direction: column; flex: 1; min-width: 0; }
.tab.vp { width: 220px; }
.tab.cs { width: 212px; }
.graph { position: relative; flex: 1; background: #262626; overflow: hidden; }
.wires { position: absolute; inset: 0; width: 100%; height: 100%; }
.graph::after { content: ""; position: absolute; inset: 0; box-shadow: inset 0 0 50px rgba(10, 10, 10, .7); pointer-events: none; }
.crumbs { position: relative; display: flex; align-items: center; height: 51px; padding: 0 8px 0 10px; background: rgba(15, 15, 17, .85); color: #8a8a8a; font-size: 25px; }
.crumbs > .chev { margin-left: 10px; color: #c0c0c0; }
.crumbs i { width: 2px; height: 45px; margin: 0 12px; background: #222; }
.crumbs .flip { margin-left: 25px; }
.crumbs .big { margin: 0 20px 0 4px; }
.crumbs span + svg { margin: 0 14px 0 12px; }
.crumbs b { margin-left: auto; font-size: 25px; color: #393939; }
.watermark { position: absolute; right: 14px; bottom: 18px; font: 700 84px/96px "Liberation Sans Narrow", "Roboto Condensed", Roboto, sans-serif; color: #4a4a4b; }
.node { position: absolute; border: 1px solid #0a0a0a; border-radius: 5px; background: #111311; box-shadow: 0 2px 5px #0b0b0b; color: #d8d8d8; font-size: 9px; line-height: 11px; overflow: hidden; white-space: nowrap; }
.node header { display: flex; gap: 4px; padding: 2px 6px; font-weight: 700; color: #c9c9c9; }
.node header svg { margin-top: 1px; }
.node em { display: block; font-weight: 400; color: #ab9a85; }
.red { background: linear-gradient(100deg, #98191c, #7a1518 55%, #3a1012); }
.silver { background: linear-gradient(100deg, #8c8c8c, #707070 50%, #2c2c2c); }
.green { background: linear-gradient(100deg, #5f8a5c, #4d714b 50%, #2a3a29); }
.green em { color: #86a07d; }
.pins { display: flex; align-items: center; gap: 3px; height: 18px; padding: 0 7px 0 5px; }
.pins span { flex: 1; }
.pins.end { justify-content: flex-end; height: 23px; }
.white { color: #fff; }
.hollow { color: transparent; }
.bool { color: #950101; }
.obj { color: #109fe3; }
.n-event { left: 101px; top: 268px; width: 107px; height: 50px; overflow: visible; }
.n-event header { border-radius: 4px 4px 0 0; }
.badge { position: absolute; right: -8px; top: -9px; }
.n-branch { left: 529px; top: 280px; width: 114px; height: 56px; }
.n-branch .pins { height: 19px; padding: 2px 6px 0; }
.n-branch header { padding: 1px 5px; }
.n-overlap { left: 283px; top: 354px; width: 152px; height: 65px; }
.n-overlap header { padding-left: 7px; gap: 5px; }
.n-overlap .pins:nth-child(2) { margin-top: 1px; }
.n-box { left: 145px; top: 375px; width: 86px; height: 23px; border-radius: 9px; display: flex; align-items: center; justify-content: flex-end; gap: 3px; padding-right: 7px; background: radial-gradient(ellipse at 50% 0, #1c6b98, #1b3442 40%, #161a1c 75%); border-top: 1px solid #999; }
.n-pawn { left: 101px; top: 429px; width: 164px; height: 40px; }
.pins input { width: 11px; height: 12px; padding: 0 2px; border: 1px solid #b5b5b5; background: transparent; line-height: 10px; }
.n-pawn .pins { height: 23px; }
.results-tabs { height: 42px; }
.results-tabs .tab { width: 213px; gap: 10px; }
.results { display: flex; align-items: flex-end; justify-content: flex-end; flex: none; height: 155px; padding: 21px; background: #1a191c; }
.results button { justify-content: center; width: 101px; height: 28px; border-radius: 4px; background: #363636; color: #808080; }

.details { display: flex; flex-direction: column; width: 430px; }
.details-panel { flex: 1; background: #242424; font-size: 14px; }
.details-bar { display: flex; align-items: center; height: 53px; padding: 0 0 2px 11px; font-size: 18px; }
.details-bar .searchbox { width: 354px; margin-right: 17px; }
.details-bar > svg + svg { margin-left: 10px; }
.cat { display: flex; align-items: center; gap: 9px; height: 35px; padding-left: 6px; border-bottom: 1px solid #1a1a1a; background: #2f2f31; font-weight: 700; }
.prop { display: grid; grid-template-columns: 236px 152px 1fr; height: 36px; border-bottom: 1px solid #1a1a1a; }
.prop > label { padding: 7px 0 0 29px; }
.prop > div { display: flex; align-items: center; padding-left: 16px; border: solid #1a1a1a; border-width: 0 1px; }
.field { width: 131px; height: 25px; padding: 0 11px 2px; border: 1px solid #333; border-radius: 4px; background: #0f0f0f; }
.prop .type { gap: 7px; font-size: 14px; }
.types .bare { width: 50px; padding-left: 7px; border: 0; background: none; }
input[type=checkbox] { appearance: none; width: 22px; height: 22px; border: 1px solid #333; border-radius: 4px; background: #0f0f0f; }
.combo, .drop { position: relative; display: flex; align-items: center; width: 131px; height: 28px; border: 1px solid #333; border-radius: 4px; background: #0f0f0f; }
.combo input { width: 70px; height: 26px; margin-left: 10px; padding: 0 10px 2px; border: 1px solid #2c2c2c; border-radius: 4px; background: #0f0f0f; }
.combo .chev { margin-left: 14px; }
.drop select { width: 100%; height: 100%; padding: 0 10px; appearance: none; background: transparent; font-size: 18px; opacity: 1; }
.drop .chev { position: absolute; right: 16px; top: 6px; pointer-events: none; }
.off { background: #363636; color: #808080; }
.adv { display: flex; align-items: center; gap: 9px; height: 37px; padding-left: 6px; border-bottom: 1px solid #1a1a1a; }
.note { height: 36px; padding-left: 29px; line-height: 20px; border-bottom: 1px solid #1a1a1a; }

.tooltip { position: absolute; left: 603px; top: 1141px; display: flex; flex-direction: column; width: 174px; height: 67px; padding: 10px 12px; border: 1px solid #111; background: #f0eef0; color: #666; font-size: 14px; box-shadow: 1px 1px 1px #000; }
.tooltip strong { font-size: 16px; font-weight: 400; color: #0c0c0c; margin-bottom: 3px; }
.tooltip span { white-space: nowrap; }
.cursor { position: absolute; left: 593px; top: 1134px; }
</style>
